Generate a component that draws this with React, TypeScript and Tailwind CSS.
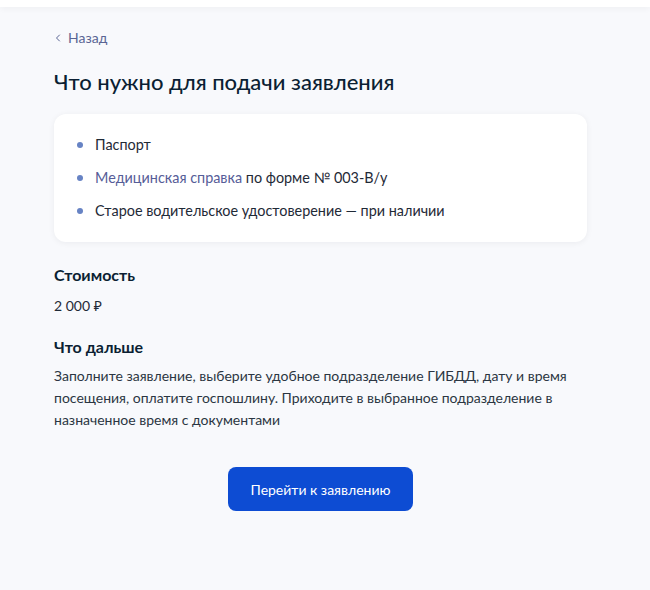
import { ChevronLeft } from "lucide-react";

const DOCS = [
  { id: "passport", text: "Паспорт" },
  { id: "med", link: "Медицинская справка", text: " по форме № 003-В/у" },
  { id: "old", text: "Старое водительское удостоверение — при наличии" },
];

export default function App() {
  return (
    <div
      className="min-h-[590px] w-full bg-[#f8f9fc] text-[#0b1f33]"
      style={{ fontFamily: "Lato, 'Noto Sans', sans-serif" }}
    >
      <div className="h-[7px] bg-white shadow-[0_2px_6px_rgba(0,0,0,0.04)]" />

      <div className="ml-[54px] w-[533px] pt-[21px]">
        <a className="-ml-[2px] flex items-center gap-[4px] text-[14px] leading-5 text-[#5a6594]">
          <ChevronLeft size={12} strokeWidth={2} className="text-[#5a6594]" />
          Назад
        </a>

        <h1 className="mt-[20px] text-[22px] font-medium leading-7">Что нужно для подачи заявления</h1>

        <div className="mt-[18px] rounded-[12px] bg-white px-[23px] py-[21px] shadow-[0_1px_6px_rgba(16,24,40,0.06)]">
          <ul className="flex flex-col gap-[13px]">
            {DOCS.map((d) => (
              <li key={d.id} className="flex items-center gap-[12px] text-[14.4px] leading-5 text-[#1f2a37]">
                <span className="h-[6px] w-[6px] shrink-0 rounded-full bg-[#6783c4]" />
                <span>
                  {d.link && <span className="text-[#565d98]">{d.link}</span>}
                  {d.text}
                </span>
              </li>
            ))}
          </ul>
        </div>

        <h2 className="mt-[23px] text-[16px] font-bold leading-5">Стоимость</h2>
        <p className="mt-[11px] text-[14px] leading-5 text-[#1f2a37]">2 000 ₽</p>

        <h2 className="mt-[21px] text-[16px] font-bold leading-5">Что дальше</h2>
        <p className="mt-[8px] text-[14px] leading-[22px] text-[#2b3642]">
          Заполните заявление, выберите удобное подразделение ГИБДД, дату и время посещения, оплатите
          госпошлину. Приходите в выбранное подразделение в назначенное время с документами
        </p>

        <div className="mt-[36px] flex justify-center">
          <button className="h-[44px] w-[185px] rounded-[8px] bg-[#0d4cd3] text-[14px] text-white">
            Перейти к заявлению
          </button>
        </div>
      </div>
    </div>
  );
}
